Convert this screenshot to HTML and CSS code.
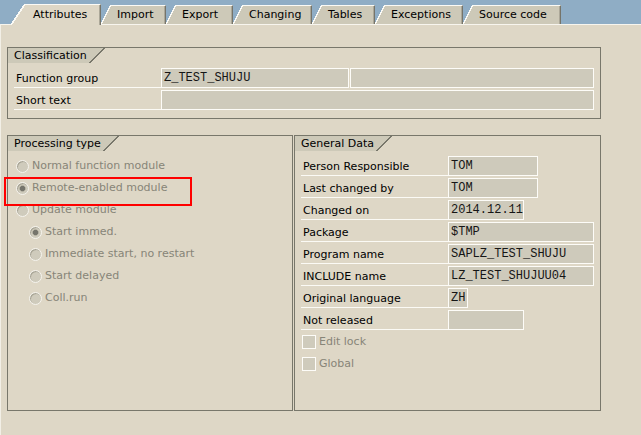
FILE: index.html
```html
<!DOCTYPE html>
<html>
<head>
<meta charset="utf-8">
<link rel="stylesheet" href="styles.css">
</head>
<body>
<div class="window">
  <nav class="tabs">
    <div class="tab tab-active w-attr">Attributes</div>
    <div class="tab w-import">Import</div>
    <div class="tab w-export">Export</div>
    <div class="tab w-changing">Changing</div>
    <div class="tab w-tables">Tables</div>
    <div class="tab w-exceptions">Exceptions</div>
    <div class="tab w-source">Source code</div>
  </nav>
  <main class="panel">
    <section class="group group-class">
      <div class="group-title">Classification</div>
      <div class="rows">
        <div class="row"><span class="label">Function group</span><span class="field w188">Z_TEST_SHUJU</span><span class="field w244 gap1"></span></div>
        <div class="row"><span class="label">Short text</span><span class="field w433"></span></div>
      </div>
    </section>
    <div class="cols">
      <section class="group group-proc">
        <div class="group-title">Processing type</div>
        <div class="rows">
          <div class="radio-row"><span class="radio"></span>Normal function module</div>
          <div class="radio-row"><span class="radio checked"></span>Remote-enabled module</div>
          <div class="radio-row"><span class="radio"></span>Update module</div>
          <div class="radio-row indent"><span class="radio checked"></span>Start immed.</div>
          <div class="radio-row indent"><span class="radio"></span>Immediate start, no restart</div>
          <div class="radio-row indent"><span class="radio"></span>Start delayed</div>
          <div class="radio-row indent"><span class="radio"></span>Coll.run</div>
        </div>
      </section>
      <section class="group group-gen">
        <div class="group-title">General Data</div>
        <div class="rows">
          <div class="row"><span class="label">Person Responsible</span><span class="field w90">TOM</span></div>
          <div class="row"><span class="label">Last changed by</span><span class="field w90">TOM</span></div>
          <div class="row"><span class="label">Changed on</span><span class="field w76">2014.12.11</span></div>
          <div class="row"><span class="label">Package</span><span class="field w146">$TMP</span></div>
          <div class="row"><span class="label">Program name</span><span class="field w146">SAPLZ_TEST_SHUJU</span></div>
          <div class="row"><span class="label">INCLUDE name</span><span class="field w146">LZ_TEST_SHUJUU04</span></div>
          <div class="row"><span class="label">Original language</span><span class="field w20">ZH</span></div>
          <div class="row"><span class="label">Not released</span><span class="field w76"></span></div>
          <div class="check-row"><span class="checkbox"></span>Edit lock</div>
          <div class="check-row"><span class="checkbox"></span>Global</div>
        </div>
      </section>
    </div>
  </main>
  <div class="highlight"></div>
</div>
</body>
</html>
```
FILE: styles.css
```css
html, body {
  margin: 0;
  padding: 0;
  background: #ded7c6;
}
body {
  font-family: "DejaVu Sans", "Liberation Sans", sans-serif;
  font-size: 11px;
  color: #000;
}
.window {
  position: relative;
  width: 641px;
  height: 435px;
  overflow: hidden;
  background: #ded7c6;
}

/* Tab strip */
.tabs {
  position: relative;
  z-index: 1;
  height: 24px;
  box-sizing: border-box;
  background: #8fadc5;
  display: flex;
  align-items: flex-end;
  padding-left: 11px;
}
.tab {
  position: relative;
  flex: none;
  height: 19px;
  box-sizing: border-box;
  margin-left: 10px;
  padding-left: 6px;
  border-top: 1px solid #fbfaf5;
  border-right: 1px solid #75746a;
  box-shadow: inset -1px 0 0 #aba798;
  background: #cdc9b8;
  line-height: 18px;
  white-space: nowrap;
}
.tab::before {
  content: "";
  position: absolute;
  left: -10px;
  top: -1px;
  width: 10px;
  height: calc(100% + 1px);
  background: linear-gradient(to bottom right,
    transparent calc(50% - 0.7px),
    #fbfaf5 calc(50% - 0.7px),
    #fbfaf5 calc(50% + 0.7px),
    #cdc9b8 calc(50% + 0.7px));
}
.tab-active {
  height: 21px;
  margin-bottom: -1px;
  margin-left: 14px;
  padding-left: 8px;
  padding-top: 1px;
  background: #ded7c6;
}
.tab-active::before {
  left: -14px;
  width: 14px;
  background: linear-gradient(to bottom right,
    transparent calc(50% - 0.7px),
    #fbfaf5 calc(50% - 0.7px),
    #fbfaf5 calc(50% + 0.7px),
    #ded7c6 calc(50% + 0.7px));
}
.w-attr { width: 76px; }
.w-import { width: 55px; }
.w-export { width: 57px; }
.w-changing { width: 69px; }
.w-tables { width: 53px; }
.w-exceptions { width: 78px; }
.w-source { width: 88px; }

/* Panel */
.panel {
  display: block;
  height: 411px;
  box-sizing: border-box;
  border-top: 1px solid #f7f5ee;
  border-left: 1px solid #f2efe6;
  padding: 22px 0 0 6px;
}
.group {
  box-sizing: border-box;
  border: 1px solid #78776b;
}
.group-class {
  width: 594px;
  height: 72px;
}
.cols {
  display: flex;
  gap: 1px;
  margin-top: 16px;
  height: 276px;
}
.group-proc { width: 286px; }
.group-gen { width: 307px; }

.group-title {
  display: flex;
  width: fit-content;
  height: 15px;
  line-height: 15px;
  padding: 0 2px 0 6px;
  margin-right: 16px;
  position: relative;
  background: #cdc9b8;
}
.group-title::after {
  content: "";
  position: absolute;
  right: -16px;
  top: 0;
  width: 16px;
  height: 15px;
  background: linear-gradient(to bottom right,
    #cdc9b8 calc(50% - 0.7px),
    #78776b calc(50% - 0.7px),
    #78776b calc(50% + 0.7px),
    transparent calc(50% + 0.7px));
}

.rows {
  display: flex;
  flex-direction: column;
  gap: 2px;
  margin-top: 5px;
  padding: 0 6px;
}
.row {
  display: flex;
  height: 20px;
}
.label {
  flex: none;
  width: 147px;
  height: 20px;
  box-sizing: border-box;
  border-bottom: 1px solid #fbfaf5;
  padding: 1px 0 0 2px;
  line-height: 19px;
  white-space: nowrap;
}
.field {
  flex: none;
  height: 20px;
  box-sizing: border-box;
  border: 1px solid #fdfcf8;
  background: #cecabb;
  padding: 0 2px;
  font-family: "Liberation Mono", "DejaVu Sans Mono", monospace;
  font-size: 12px;
  line-height: 18px;
  color: #151515;
  white-space: pre;
  overflow: hidden;
}
.gap1 { margin-left: 1px; }
.w20 { width: 20px; }
.w76 { width: 76px; }
.w90 { width: 90px; }
.w146 { width: 146px; }
.w188 { width: 188px; }
.w244 { width: 244px; }
.w433 { width: 433px; }

.radio-row,
.check-row {
  display: flex;
  align-items: center;
  height: 20px;
  gap: 3px;
  color: #878578;
  white-space: nowrap;
  line-height: 20px;
}
.radio-row { padding-left: 2px; }
.radio-row.indent { padding-left: 15px; }
.radio {
  flex: none;
  width: 13px;
  height: 13px;
  box-sizing: border-box;
  border-radius: 50%;
  border: 1px solid #f6f4ee;
  background: #cfcbbc;
  box-shadow: inset 1px 1px 0 #a8a596;
}
.radio.checked {
  background: radial-gradient(circle, #76756c 0 2.3px, #a9a698 2.8px, #cfcbbc 3.6px);
}
.check-row { padding-left: 1px; }
.checkbox {
  flex: none;
  width: 14px;
  height: 14px;
  box-sizing: border-box;
  border: 1px solid #fdfcf8;
  background: #cfcbbc;
}

.highlight {
  position: absolute;
  left: 4px;
  top: 177px;
  width: 188px;
  height: 29px;
  box-sizing: border-box;
  border: 2px solid #ff0000;
}
```
